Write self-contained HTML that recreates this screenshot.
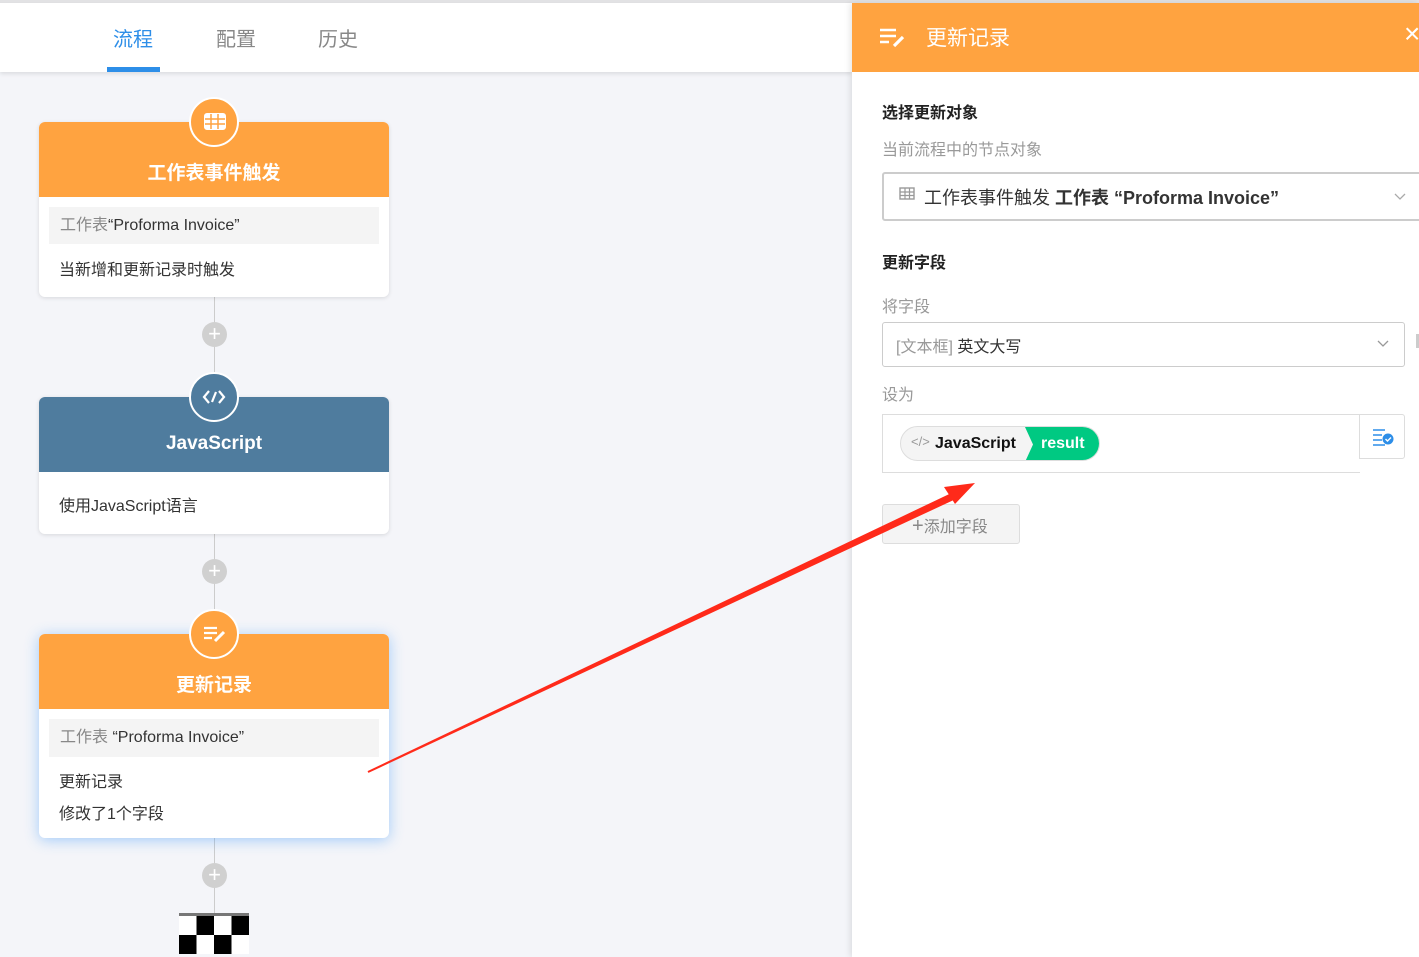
<!DOCTYPE html>
<html><head><meta charset="utf-8"><style>
*{box-sizing:border-box;margin:0;padding:0}
body{width:1419px;height:957px;overflow:hidden;background:#f4f5f9;font-family:"Liberation Sans","Noto Sans CJK SC",sans-serif;position:relative;color:#333}
.abs{position:absolute}
.top{left:0;top:0;width:1419px;height:3px;background:#e2e2e4}
.hdr{left:0;top:3px;width:852px;height:69px;background:#fff;box-shadow:0 2px 4px rgba(0,0,0,.1)}
.tab{top:23px;font-size:20px;color:#888}
.card{left:39px;width:350px;background:#fff;border-radius:6px;box-shadow:0 1px 4px rgba(0,0,0,.12);overflow:hidden}
.ch{height:75px;background:#ffa340;color:#fff;font-weight:bold;font-size:19px;text-align:center;padding-top:36px}
.gray{margin:10px 10px 0;background:#f4f4f4;height:37px;line-height:37px;padding-left:11px;font-size:16px;color:#333}
.t{padding-left:20px;font-size:16px;color:#333}
.circ{width:50px;height:50px;border-radius:50%;border:2px solid #fff;background:#ffa340;left:189px}
.line{left:214px;width:1px;background:#ccc}
.plus{left:202px;width:25px;height:25px;border-radius:50%;background:#d0d0d0;color:#fff;font-size:22px;line-height:24px;text-align:center}
.panel{left:852px;top:3px;width:567px;height:954px;background:#fff;box-shadow:-2px 0 6px rgba(0,0,0,.1)}
.lbl{left:882px;font-size:16px;color:#999}
.bold{left:882px;font-size:16px;font-weight:bold;color:#222}
</style></head><body>
<div class="abs top"></div>
<div class="abs hdr"></div>
<div class="abs tab" style="left:113px;color:#2d8ee8">流程</div>
<div class="abs" style="left:107px;top:67px;width:53px;height:5px;background:#2d8ee8"></div>
<div class="abs tab" style="left:216px">配置</div>
<div class="abs tab" style="left:318px">历史</div>

<div class="abs line" style="top:297px;height:100px"></div>
<div class="abs line" style="top:534px;height:100px"></div>
<div class="abs line" style="top:838px;height:76px"></div>
<div class="abs plus" style="top:322px">+</div>
<div class="abs plus" style="top:559px">+</div>
<div class="abs plus" style="top:863px">+</div>

<div class="abs card" style="top:122px;height:175px">
<div class="ch">工作表事件触发</div>
<div class="gray"><span style="color:#888">工作表</span>“Proforma Invoice”</div>
<div class="t" style="margin-top:12px">当新增和更新记录时触发</div>
</div>
<div class="abs circ" style="top:97px"><svg width="46" height="46"><g fill="none" stroke="#fff" stroke-width="2"><rect x="14" y="15" width="20" height="15" rx="2" fill="#fff"/><path d="M14 20h20M14 25h20M20 15v15M27 15v15" stroke="#ffa340" stroke-width="1.5"/></g></svg></div>

<div class="abs card" style="top:397px;height:137px">
<div class="ch" style="background:#4f7c9e">JavaScript</div>
<div class="t" style="margin-top:20px">使用JavaScript语言</div>
</div>
<div class="abs circ" style="top:372px;background:#4f7c9e"><svg width="46" height="46"><path d="M18 17l-5 6 5 6M28 17l5 6-5 6M25 18l-4 10" fill="none" stroke="#fff" stroke-width="2.2"/></svg></div>

<div class="abs card" style="top:634px;height:204px;box-shadow:0 2px 14px rgba(60,150,250,.45)">
<div class="ch">更新记录</div>
<div class="gray" style="height:38px"><span style="color:#888">工作表</span> “Proforma Invoice”</div>
<div class="t" style="margin-top:11px">更新记录</div>
<div class="t" style="margin-top:8px">修改了1个字段</div>
</div>
<div class="abs circ" style="top:609px"><svg width="46" height="46"><path d="M13 17h13M13 22h13M13 27h8" stroke="#fff" stroke-width="2.2"/><path d="M24 30l9-9" stroke="#fff" stroke-width="3"/></svg></div>

<div class="abs" style="left:179px;top:913px;width:70px;height:3px;background:#777"></div>
<svg class="abs" style="left:179px;top:916px" width="70" height="38"><rect width="70" height="38" fill="#fff"/><g fill="#000"><rect x="17.5" y="0" width="17.5" height="19"/><rect x="52.5" y="0" width="17.5" height="19"/><rect x="0" y="19" width="17.5" height="19"/><rect x="35" y="19" width="17.5" height="19"/></g></svg>

<div class="abs panel"></div>
<div class="abs" style="left:852px;top:3px;width:567px;height:69px;background:#ffa340"></div>
<svg class="abs" style="left:878px;top:26px" width="30" height="24"><path d="M2 4h16M2 10h16M2 16h9" stroke="#fff" stroke-width="2.4"/><path d="M16 20l9-9" stroke="#fff" stroke-width="3.2"/></svg>
<div class="abs" style="left:926px;top:22px;font-size:21px;color:#fff">更新记录</div>
<div class="abs" style="left:1404px;top:18px;font-size:28px;color:#fff">×</div>

<div class="abs bold" style="top:99px">选择更新对象</div>
<div class="abs lbl" style="top:136px">当前流程中的节点对象</div>
<div class="abs" style="left:882px;top:172px;width:545px;height:49px;border:2px solid #ccc;border-radius:3px"></div>
<svg class="abs" style="left:899px;top:187px" width="16" height="14"><rect x="1" y="1" width="14" height="11" fill="none" stroke="#999" stroke-width="1.4"/><path d="M1 5h14M1 8.5h14M6 1v11M10.5 1v11" stroke="#999" stroke-width="1.2"/></svg>
<div class="abs" style="left:924px;top:184px;font-size:18px;color:#333">工作表事件触发 <b>工作表 “Proforma Invoice”</b></div>
<svg class="abs" style="left:1393px;top:192px" width="14" height="10"><path d="M2 2l5 5 5-5" fill="none" stroke="#aaa" stroke-width="1.3"/></svg>

<div class="abs bold" style="top:249px">更新字段</div>
<div class="abs lbl" style="top:293px">将字段</div>
<div class="abs" style="left:882px;top:322px;width:523px;height:45px;border:1px solid #ccc;border-radius:3px"></div>
<div class="abs" style="left:896px;top:333px;font-size:16px;color:#333"><span style="color:#999">[文本框]</span> 英文大写</div>
<svg class="abs" style="left:1376px;top:339px" width="14" height="10"><path d="M2 2l5 5 5-5" fill="none" stroke="#999" stroke-width="1.3"/></svg>
<div class="abs" style="left:1416px;top:334px;width:3px;height:14px;background:#ccc"></div>
<div class="abs lbl" style="top:381px">设为</div>
<div class="abs" style="left:882px;top:414px;width:478px;height:59px;border:1px solid #ddd;border-right:none"></div>
<div class="abs" style="left:1359px;top:414px;width:46px;height:45px;border:1px solid #ddd;border-radius:0 3px 3px 0"></div>
<svg class="abs" style="left:1371px;top:427px" width="24" height="20"><path d="M2 3h12M2 8h9M2 13h9M2 18h12" stroke="#2d8ee8" stroke-width="1.6"/><circle cx="17" cy="12" r="5.5" fill="#2d8ee8"/><path d="M14.5 12l2 2 3.5-3.5" stroke="#fff" stroke-width="1.4" fill="none"/></svg>
<div class="abs" style="left:900px;top:426px;width:200px;height:35px;border-radius:18px;border:1px solid #ddd;background:#f4f4f4;overflow:hidden">
<div class="abs" style="left:10px;top:7px;font-size:13px;color:#999">&lt;/&gt;</div>
<div class="abs" style="left:34px;top:8px;font-size:16px;font-weight:bold;color:#111">JavaScript</div>
<div class="abs" style="left:124px;top:0;width:76px;height:35px;background:#00c982;clip-path:polygon(0 0,100% 0,100% 100%,0 100%,8px 50%)"></div>
<div class="abs" style="left:140px;top:8px;font-size:16px;font-weight:bold;color:#fff">result</div>
</div>
<div class="abs" style="left:882px;top:504px;width:138px;height:40px;border:1px solid #ddd;border-radius:3px;background:#f4f4f4;font-size:16px;color:#888;padding:8px 0 0 29px"><span style="font-size:20px;line-height:16px">+</span>添加字段</div>

<svg class="abs" style="left:0;top:0" width="1419" height="957"><polygon points="368,773 955,492 958,498" fill="#ff2a1a"/><line x1="368" y1="772" x2="960" y2="490" stroke="#ff2a1a" stroke-width="2"/><polygon points="975,483 944,487 955,504" fill="#ff2a1a"/></svg>
</body></html>
